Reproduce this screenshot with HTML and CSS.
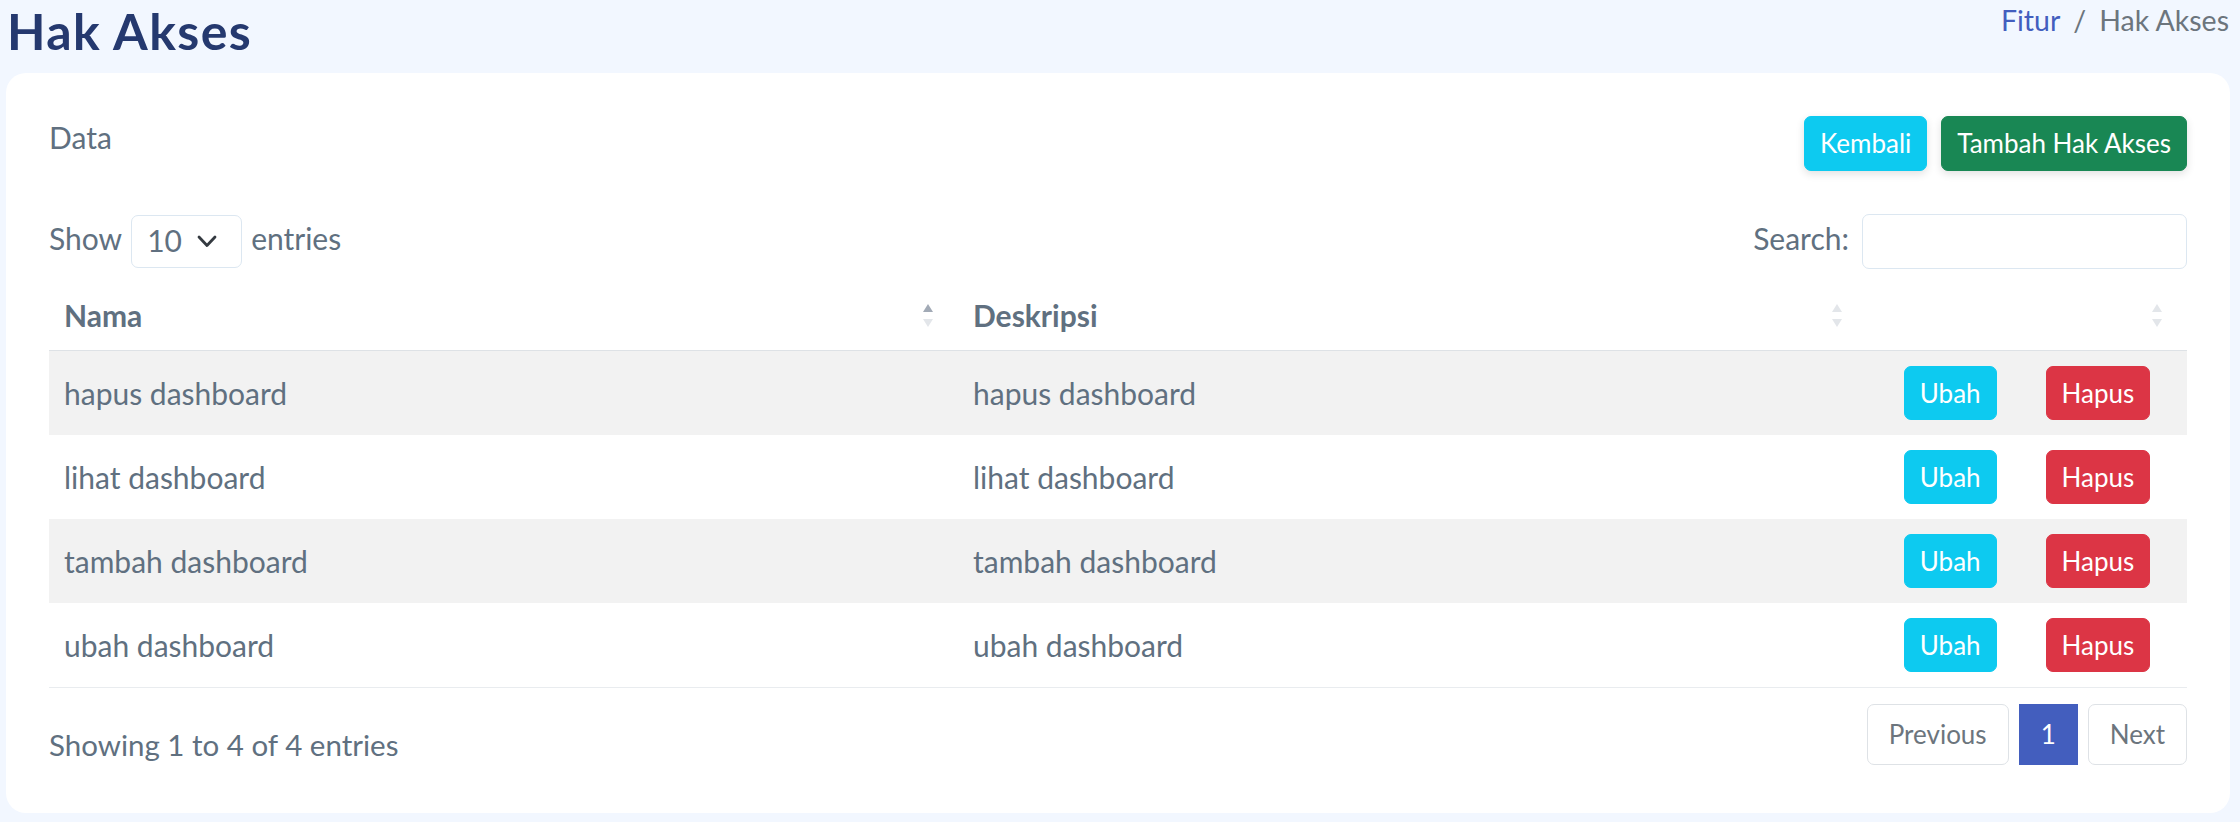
FILE: index.html
```html
<!DOCTYPE html>
<html lang="id">
<head>
<meta charset="utf-8">
<title>Hak Akses</title>
<link rel="stylesheet" href="styles.css">
</head>
<body>
<div class="page">
  <header class="page-heading">
    <h3 class="title">Hak Akses</h3>
    <nav class="breadcrumb">
      <a class="crumb-link">Fitur</a>
      <span class="crumb-sep">/</span>
      <span class="crumb-current">Hak Akses</span>
    </nav>
  </header>

  <section class="card">
    <div class="card-header">
      <span class="card-title">Data</span>
      <div class="actions">
        <button class="btn btn-info btn-raised">Kembali</button>
        <button class="btn btn-success btn-raised">Tambah Hak Akses</button>
      </div>
    </div>

    <div class="dt-top">
      <div class="dt-length">
        <span class="lbl">Show</span>
        <div class="select">
          <span class="select-value">10</span>
          <svg class="chevron" viewBox="0 0 20 13" width="20" height="13"><path d="M2 2 L10 10.5 L18 2" fill="none" stroke="#343a40" stroke-width="2.8" stroke-linecap="round" stroke-linejoin="round"/></svg>
        </div>
        <span class="lbl">entries</span>
      </div>
      <div class="dt-filter">
        <span class="lbl">Search:</span>
        <input class="search" type="text" aria-label="Search">
      </div>
    </div>

    <table class="dt-table">
      <colgroup>
        <col class="col-main">
        <col class="col-main">
        <col class="col-action">
      </colgroup>
      <thead>
        <tr>
          <th><div class="th-inner"><span>Nama</span><span class="sort"><i class="tri up active"></i><i class="tri down"></i></span></div></th>
          <th><div class="th-inner"><span>Deskripsi</span><span class="sort"><i class="tri up"></i><i class="tri down"></i></span></div></th>
          <th><div class="th-inner"><span></span><span class="sort"><i class="tri up"></i><i class="tri down"></i></span></div></th>
        </tr>
      </thead>
      <tbody>
        <tr class="odd">
          <td>hapus dashboard</td>
          <td>hapus dashboard</td>
          <td><div class="row-actions"><button class="btn btn-sm btn-info">Ubah</button><button class="btn btn-sm btn-danger">Hapus</button></div></td>
        </tr>
        <tr>
          <td>lihat dashboard</td>
          <td>lihat dashboard</td>
          <td><div class="row-actions"><button class="btn btn-sm btn-info">Ubah</button><button class="btn btn-sm btn-danger">Hapus</button></div></td>
        </tr>
        <tr class="odd">
          <td>tambah dashboard</td>
          <td>tambah dashboard</td>
          <td><div class="row-actions"><button class="btn btn-sm btn-info">Ubah</button><button class="btn btn-sm btn-danger">Hapus</button></div></td>
        </tr>
        <tr class="last">
          <td>ubah dashboard</td>
          <td>ubah dashboard</td>
          <td><div class="row-actions"><button class="btn btn-sm btn-info">Ubah</button><button class="btn btn-sm btn-danger">Hapus</button></div></td>
        </tr>
      </tbody>
    </table>

    <div class="dt-bottom">
      <div class="dt-info">Showing 1 to 4 of 4 entries</div>
      <ul class="pagination">
        <li class="page-item"><a class="page-link">Previous</a></li>
        <li class="page-item active"><a class="page-link">1</a></li>
        <li class="page-item"><a class="page-link">Next</a></li>
      </ul>
    </div>
  </section>
</div>
</body>
</html>
```

FILE: styles.css
```css
* {
  box-sizing: border-box;
}

html, body {
  margin: 0;
  padding: 0;
}

body {
  background: #f2f7ff;
  font-family: "Lato", "Liberation Sans", sans-serif;
  font-size: 30px;
  color: #607080;
}

.page {
  padding: 0 10px 8px 6px;
}

/* heading */
.page-heading {
  display: flex;
  justify-content: space-between;
  align-items: flex-start;
  height: 73px;
}

.title {
  margin: 0;
  padding-left: 1px;
  font-size: 50px;
  line-height: 62px;
  letter-spacing: 1.4px;
  font-weight: 700;
  color: #25396f;
}

.breadcrumb {
  display: flex;
  gap: 13px;
  line-height: 40px;
  font-size: 28.5px;
  padding-right: 1px;
}

.crumb-link {
  color: #435ebe;
}

.crumb-sep,
.crumb-current {
  color: #6c757d;
}

/* card */
.card {
  background: #fff;
  border-radius: 20px;
  padding: 43px 43px 46px 43px;
}

.card-header {
  display: flex;
  justify-content: space-between;
  align-items: flex-start;
  margin-bottom: 43px;
}

.card-title {
  line-height: 42px;
  color: #607080;
}

.actions {
  display: flex;
  gap: 14px;
}

/* buttons */
.btn {
  font-family: inherit;
  font-size: 26px;
  line-height: 39px;
  padding: 7px 15px;
  border: 1px solid transparent;
  border-radius: 7px;
  color: #fff;
  cursor: pointer;
}

.btn-sm {
  line-height: 38px;
}

.btn-info {
  background: #0dcaf0;
  border-color: #0dcaf0;
}

.btn-success {
  background: #198754;
  border-color: #198754;
}

.btn-danger {
  background: #dc3545;
  border-color: #dc3545;
}

.btn-raised {
  box-shadow: 0 3px 9px rgba(0, 0, 0, 0.12);
}

/* datatable top */
.dt-top {
  display: flex;
  justify-content: space-between;
  align-items: center;
  height: 55px;
}

.dt-length,
.dt-filter {
  display: flex;
  align-items: center;
}

.dt-length {
  gap: 9px;
}

.dt-filter {
  gap: 13px;
}

.lbl {
  line-height: 40px;
  padding-bottom: 8px;
}

.select {
  display: flex;
  align-items: center;
  width: 111px;
  height: 53px;
  border: 1px solid #dce7f1;
  border-radius: 7px;
  padding-left: 15px;
}

.select-value {
  line-height: 40px;
  padding-bottom: 4px;
}

.chevron {
  margin-left: auto;
  margin-right: 24px;
}

.search {
  width: 325px;
  height: 55px;
  border: 1px solid #dce7f1;
  border-radius: 7px;
  background: #fff;
  outline: none;
  font-family: inherit;
  font-size: 26px;
}

/* table */
.dt-table {
  width: 100%;
  table-layout: fixed;
  border-collapse: collapse;
  margin-top: 11px;
}

.col-main {
  width: 909px;
}

.col-action {
  width: 320px;
}

.dt-table th {
  padding: 14px 25px 14px 15px;
  text-align: left;
  font-weight: 700;
  line-height: 42px;
  color: #607080;
  border-bottom: 1px solid #dee2e6;
}

.th-inner {
  display: flex;
  justify-content: space-between;
  align-items: center;
}

.sort {
  display: flex;
  flex-direction: column;
  gap: 7px;
}

.tri {
  display: block;
  width: 0;
  height: 0;
  border-left: 5px solid transparent;
  border-right: 5px solid transparent;
}

.tri.up {
  border-bottom: 8px solid #e3e6ea;
}

.tri.down {
  border-top: 8px solid #e3e6ea;
}

.tri.up.active {
  border-bottom-color: #a2aab6;
}

.dt-table td {
  padding: 15px 15px;
  line-height: 45px;
  vertical-align: middle;
  color: #607080;
}

.dt-table tr.odd td {
  background: #f2f2f2;
}

.dt-table tr.last td {
  border-bottom: 1px solid #e9ecef;
}

.row-actions {
  display: flex;
  justify-content: center;
  gap: 49px;
}

/* datatable bottom */
.dt-bottom {
  display: flex;
  justify-content: space-between;
  align-items: flex-start;
  margin-top: 16px;
}

.dt-info {
  padding-top: 18px;
  line-height: 45px;
  font-size: 29.5px;
}

.pagination {
  display: flex;
  gap: 10px;
  list-style: none;
  margin: 0;
  padding: 0;
}

.page-link {
  display: block;
  font-size: 26px;
  line-height: 39px;
  padding: 10px 21px;
  border: 1px solid #dee2e6;
  border-radius: 7px;
  color: #6c757d;
  background: #fff;
}

.page-item.active .page-link {
  background: #435ebe;
  border-color: #435ebe;
  color: #fff;
  border-radius: 0;
}
```
